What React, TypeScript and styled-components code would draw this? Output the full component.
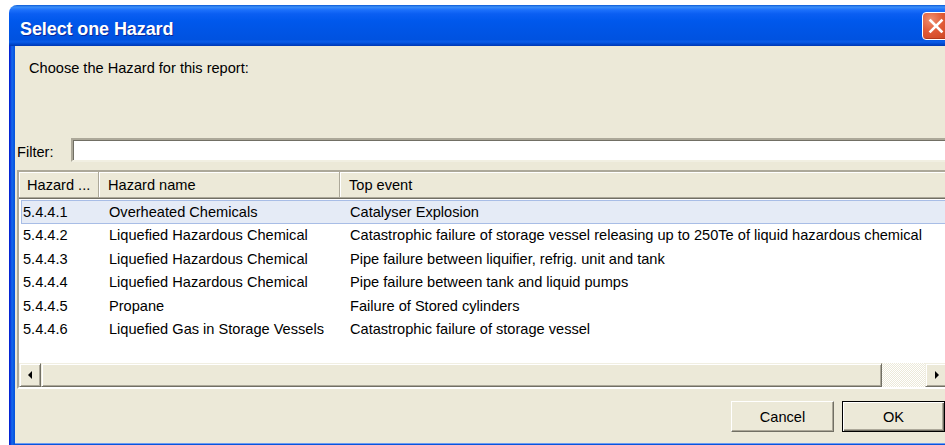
import React from 'react';
import styled, { createGlobalStyle } from 'styled-components';

const Global = createGlobalStyle`
  html, body {
    margin: 0;
    padding: 0;
    background: #ffffff;
    overflow: hidden;
  }
  body {
    width: 945px;
    height: 445px;
    font-family: "Liberation Sans", Arial, sans-serif;
    color: #000;
  }
`;

const uiFont = `"Liberation Sans", Arial, sans-serif`;

const Window = styled.div`
  margin: 5px 0 0 9px;
  width: 948px;
  display: flex;
  flex-direction: column;
`;

const TitleBar = styled.div`
  height: 41px;
  box-sizing: border-box;
  border-radius: 8px 8px 0 0;
  padding: 0 7px 0 11px;
  display: flex;
  align-items: center;
  background: linear-gradient(
    to bottom,
    #0a5ad6 0,
    #3c8ff8 2px,
    #1c70fb 5px,
    #0a5ef2 9px,
    #0058ec 16px,
    #0055e6 60%,
    #0052e0 84%,
    #0a5ce8 90%,
    #0049d0 95%,
    #0037b0 100%
  );
`;

const Title = styled.div`
  flex: 1;
  color: #ffffff;
  font: bold 18px ${uiFont};
  letter-spacing: -0.1px;
  text-shadow: 1px 1px 0 #0b2a9a;
  padding-top: 7px;
`;

const CloseButton = styled.div`
  width: 28px;
  height: 28px;
  box-sizing: border-box;
  border: 1px solid #ffffff;
  border-radius: 4px;
  display: flex;
  align-items: center;
  justify-content: center;
  background: radial-gradient(circle at 30% 25%, #ef8e6f 0, #e05a37 45%, #c9421f 100%);
  box-shadow: inset -1px -1px 0 #b33a1d;
`;

const Frame = styled.div`
  padding: 0 6px 6px;
  background: linear-gradient(
    to right,
    #0019cf 0,
    #0831d9 1px,
    #166aee 3px,
    #0855dd 5px,
    #0855dd calc(100% - 5px),
    #166aee calc(100% - 3px),
    #0831d9 calc(100% - 1px),
    #0019cf 100%
  );
`;

const Client = styled.div`
  height: 397px;
  box-sizing: border-box;
  padding: 0 2px;
  background: #ece9d8;
  display: flex;
  flex-direction: column;
  box-shadow: 0 1px 0 #6d9bf0;
  font: 14.6px ${uiFont};
`;

const Prompt = styled.div`
  margin: 14px 0 0 12px;
  line-height: 17px;
  height: 17px;
`;

const FilterRow = styled.div`
  margin-top: 61px;
  height: 24px;
  display: flex;
  align-items: center;
`;

const FilterLabel = styled.label`
  width: 54px;
  padding-top: 5px;
  line-height: 17px;
`;

const TextBox = styled.div`
  flex: 1;
  height: 24px;
  box-sizing: border-box;
  background: #ffffff;
  border-style: solid;
  border-width: 2px;
  border-color: #aca899 #f1efe2 #f1efe2 #aca899;
  box-shadow: inset 1px 1px 0 #716f64;
`;

const ListView = styled.div`
  margin-top: 8px;
  height: 219px;
  box-sizing: border-box;
  border-style: solid;
  border-width: 2px 1px 2px 2px;
  border-color: #aca899 #f1efe2 #ffffff #aca899;
  box-shadow: inset 1px 1px 0 #716f64;
  background: #ffffff;
  display: flex;
  flex-direction: column;
  overflow: hidden;
`;

const Columns = `80px 241px 1fr`;

const Header = styled.div`
  height: 27px;
  flex: none;
  display: grid;
  grid-template-columns: ${Columns};
  background: #ece9d8;
  border-bottom: 1px solid #716f64;
  box-sizing: border-box;
`;

const HeaderCell = styled.div<{ $pad: number }>`
  padding-left: ${(p) => p.$pad}px;
  display: flex;
  align-items: center;
  white-space: nowrap;
  overflow: hidden;
  border-bottom: 1px solid #aca899;
  border-right: 1px solid #aca899;
  box-shadow: inset 1px 1px 0 #ffffff;
`;

const Rows = styled.div`
  flex: 1;
  padding-top: 1px;
  background: #ffffff;
`;

const Row = styled.div<{ $selected?: boolean }>`
  height: 23.5px;
  box-sizing: border-box;
  margin-left: 2px;
  display: grid;
  grid-template-columns: 78px 241px 1fr;
  align-items: center;
  white-space: nowrap;
  background: ${(p) => (p.$selected ? '#e5ebf6' : 'transparent')};
  border: 1px solid ${(p) => (p.$selected ? '#a8bde6' : 'transparent')};
  border-right: none;
`;

const Cell = styled.div<{ $pad: number }>`
  padding-left: ${(p) => p.$pad}px;
  overflow: visible;
`;

const ScrollBar = styled.div`
  height: 24px;
  flex: none;
  display: flex;
  background: #ece9d8;
`;

const ScrollButton = styled.div<{ $w: number }>`
  width: ${(p) => p.$w}px;
  flex: none;
  box-sizing: border-box;
  display: flex;
  align-items: center;
  justify-content: center;
  background: #ece9d8;
  border-style: solid;
  border-width: 1px;
  border-color: #f1efe2 #716f64 #716f64 #f1efe2;
  box-shadow: inset 1px 1px 0 #ffffff, inset -1px -1px 0 #aca899;
`;

const Thumb = styled.div`
  width: 841px;
  flex: none;
  box-sizing: border-box;
  background: #ece9d8;
  border-style: solid;
  border-width: 1px;
  border-color: #f1efe2 #716f64 #716f64 #f1efe2;
  box-shadow: inset 1px 1px 0 #ffffff, inset -1px -1px 0 #aca899;
`;

const Track = styled.div`
  flex: 1;
  background-color: #ece9d8;
  background-image: conic-gradient(
    #ffffff 25%,
    transparent 0 50%,
    #ffffff 0 75%,
    transparent 0
  );
  background-size: 2px 2px;
`;

const ButtonRow = styled.div`
  margin-top: 12px;
  padding-right: 4px;
  display: flex;
  justify-content: flex-end;
  gap: 8px;
`;

const PushButton = styled.button<{ $default?: boolean }>`
  width: 103px;
  height: 31px;
  box-sizing: border-box;
  padding: 0;
  font: 14.6px ${uiFont};
  color: #000;
  background: #ece9d8;
  border-style: solid;
  border-width: 1px;
  border-color: ${(p) => (p.$default ? '#000000' : '#ffffff #716f64 #716f64 #ffffff')};
  box-shadow: ${(p) =>
    p.$default
      ? 'inset 1px 1px 0 #ffffff, inset -1px -1px 0 #716f64, inset -2px -2px 0 #aca899'
      : 'inset -1px -1px 0 #aca899'};
`;

type Hazard = { id: string; name: string; event: string };

const hazards: Hazard[] = [
  { id: '5.4.4.1', name: 'Overheated Chemicals', event: 'Catalyser Explosion' },
  {
    id: '5.4.4.2',
    name: 'Liquefied Hazardous Chemical',
    event: 'Catastrophic failure of storage vessel releasing up to 250Te of liquid hazardous chemical',
  },
  {
    id: '5.4.4.3',
    name: 'Liquefied Hazardous Chemical',
    event: 'Pipe failure between liquifier, refrig. unit and tank',
  },
  {
    id: '5.4.4.4',
    name: 'Liquefied Hazardous Chemical',
    event: 'Pipe failure between tank and liquid pumps',
  },
  { id: '5.4.4.5', name: 'Propane', event: 'Failure of Stored cylinders' },
  {
    id: '5.4.4.6',
    name: 'Liquefied Gas in Storage Vessels',
    event: 'Catastrophic failure of storage vessel',
  },
];

const CloseGlyph = () => (
  <svg width="16" height="16" viewBox="0 0 16 16">
    <path d="M2.5 2.5 L13.5 13.5 M13.5 2.5 L2.5 13.5" stroke="#ffffff" strokeWidth="2.6" strokeLinecap="square" />
  </svg>
);

const Arrow = ({ dir }: { dir: 'left' | 'right' }) => (
  <svg width="5" height="8" viewBox="0 0 5 8">
    {dir === 'left' ? <path d="M4 0 L4 8 L0 4 Z" fill="#000" /> : <path d="M1 0 L1 8 L5 4 Z" fill="#000" />}
  </svg>
);

export default function App() {
  return (
    <>
      <Global />
      <Window>
        <TitleBar>
          <Title>Select one Hazard</Title>
          <CloseButton>
            <CloseGlyph />
          </CloseButton>
        </TitleBar>
        <Frame>
          <Client>
            <Prompt>Choose the Hazard for this report:</Prompt>
            <FilterRow>
              <FilterLabel>Filter:</FilterLabel>
              <TextBox />
            </FilterRow>
            <ListView>
              <Header>
                <HeaderCell $pad={8}>Hazard ...</HeaderCell>
                <HeaderCell $pad={9}>Hazard name</HeaderCell>
                <HeaderCell $pad={9}>Top event</HeaderCell>
              </Header>
              <Rows>
                {hazards.map((h, i) => (
                  <Row key={h.id} $selected={i === 0}>
                    <Cell $pad={1}>{h.id}</Cell>
                    <Cell $pad={9}>{h.name}</Cell>
                    <Cell $pad={9}>{h.event}</Cell>
                  </Row>
                ))}
              </Rows>
              <ScrollBar>
                <ScrollButton $w={22}>
                  <Arrow dir="left" />
                </ScrollButton>
                <Thumb />
                <Track />
                <ScrollButton $w={23}>
                  <Arrow dir="right" />
                </ScrollButton>
              </ScrollBar>
            </ListView>
            <ButtonRow>
              <PushButton>Cancel</PushButton>
              <PushButton $default>OK</PushButton>
            </ButtonRow>
          </Client>
        </Frame>
      </Window>
    </>
  );
}
